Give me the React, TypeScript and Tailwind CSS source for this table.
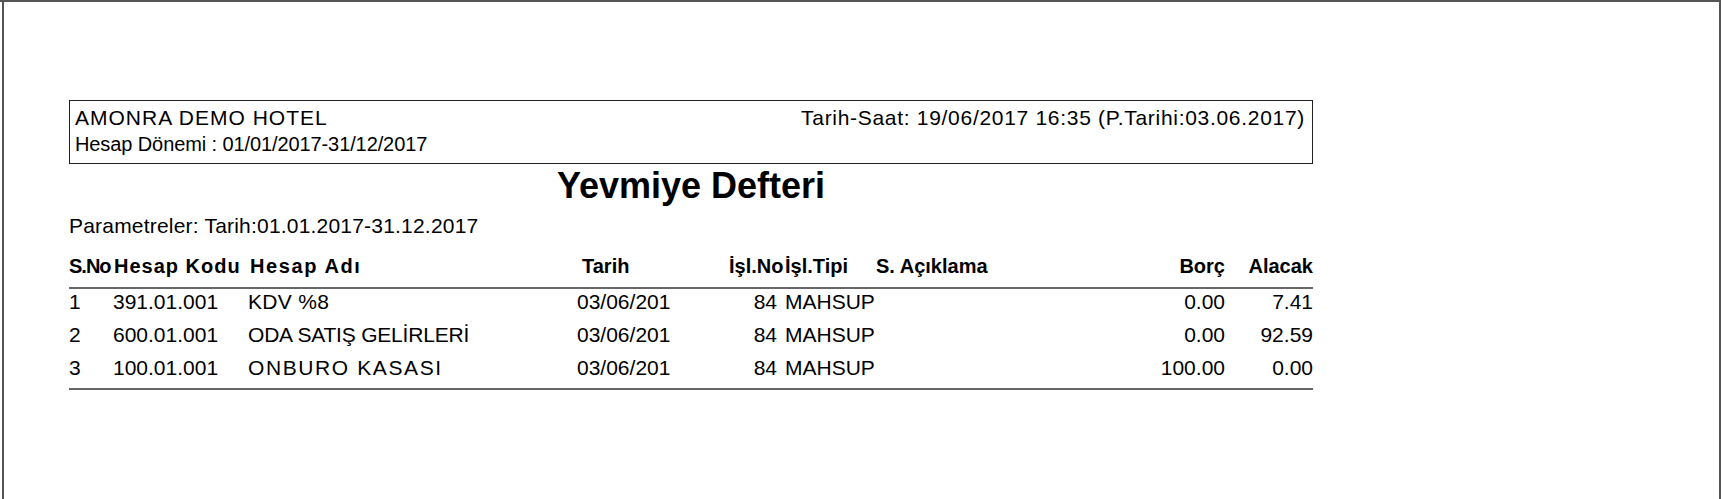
const rows = [
  { no: '1', kod: '391.01.001', ad: 'KDV %8', adTrack: 'tracking-[0.3px]', tarih: '03/06/201', islNo: '84', tip: 'MAHSUP', borc: '0.00', alacak: '7.41' },
  { no: '2', kod: '600.01.001', ad: 'ODA SATIŞ GELİRLERİ', adTrack: 'tracking-[-0.2px]', tarih: '03/06/201', islNo: '84', tip: 'MAHSUP', borc: '0.00', alacak: '92.59' },
  { no: '3', kod: '100.01.001', ad: 'ONBURO KASASI', adTrack: 'tracking-[1.6px]', tarih: '03/06/201', islNo: '84', tip: 'MAHSUP', borc: '100.00', alacak: '0.00' },
];

export default function App() {
  return (
    <div className="h-[499px] w-full border-t-2 border-r-2 border-[#555] bg-white font-['Liberation_Sans',Arial,sans-serif] text-black">
      <div className="ml-[2px] h-full border-l-2 border-[#555]">
        <div className="ml-[65px] w-[1244px] pt-[98px]">
          {/* report header box */}
          <div className="border border-[#222] px-[5px] pt-[6px] pb-[9px]">
            <div className="flex justify-between text-[21px] leading-none">
              <span className="tracking-[1px]">AMONRA DEMO HOTEL</span>
              <span className="pr-[2px] tracking-[0.7px]">Tarih-Saat: 19/06/2017 16:35 (P.Tarihi:03.06.2017)</span>
            </div>
            <div className="mt-[6px] text-[20px] leading-none tracking-[-0.1px]">Hesap Dönemi : 01/01/2017-31/12/2017</div>
          </div>

          <h1 className="mt-[4px] text-center text-[36px] leading-none font-bold">Yevmiye Defteri</h1>

          <p className="mt-[11px] text-[21px] leading-none tracking-[0.2px]">Parametreler: Tarih:01.01.2017-31.12.2017</p>

          {/* table */}
          <div className="mt-[20px] flex h-[33px] border-b-2 border-[#666] text-[20px] leading-none font-bold">
            <div className="w-[36px] tracking-[-1px] whitespace-nowrap">S.No</div>
            <div className="w-[143px] pl-[9px] tracking-[1px] whitespace-nowrap">Hesap Kodu</div>
            <div className="w-[329px] pl-[2px] tracking-[1.6px]">Hesap Adı</div>
            <div className="w-[152px] pl-[5px]">Tarih</div>
            <div className="w-[56px] whitespace-nowrap">İşl.No</div>
            <div className="w-[91px] whitespace-nowrap">İşl.Tipi</div>
            <div className="flex-1">S. Açıklama</div>
            <div className="w-[90px] text-right">Borç</div>
            <div className="w-[88px] text-right">Alacak</div>
          </div>
          <div className="border-b-2 border-[#666]">
            {rows.map((r) => (
              <div key={r.no} className="flex h-[33px] pt-[2px] text-[21px] leading-none">
                <div className="w-[36px]">{r.no}</div>
                <div className="w-[143px] pl-[8px]">{r.kod}</div>
                <div className={`w-[329px] whitespace-nowrap ${r.adTrack}`}>{r.ad}</div>
                <div className="w-[152px]">{r.tarih}</div>
                <div className="w-[56px] pr-[8px] text-right">{r.islNo}</div>
                <div className="w-[91px]">{r.tip}</div>
                <div className="flex-1" />
                <div className="w-[90px] text-right">{r.borc}</div>
                <div className="w-[88px] text-right">{r.alacak}</div>
              </div>
            ))}
          </div>
        </div>
      </div>
    </div>
  );
}
